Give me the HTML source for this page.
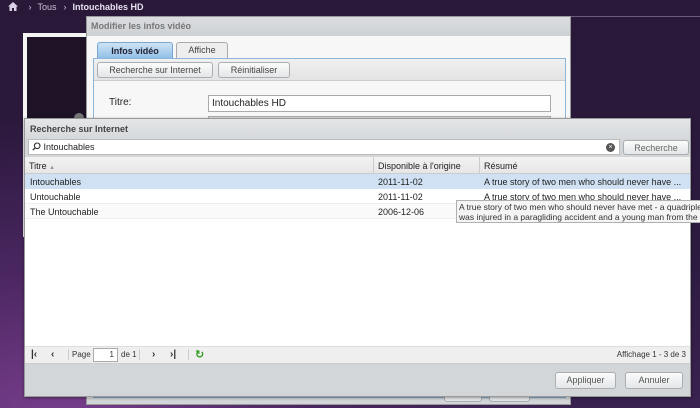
<!DOCTYPE html>
<html style="width:700px;height:408px;overflow:hidden"><head><meta charset="utf-8"><style>
*{box-sizing:border-box;margin:0;padding:0}
body{width:700px;height:408px;overflow:hidden;position:relative;font-family:"Liberation Sans","DejaVu Sans",sans-serif;font-size:9px;color:#222;
background:radial-gradient(ellipse 500px 300px at 60px 420px,#7a3f8e 0%,#4a2660 50%,transparent 100%),linear-gradient(180deg,#2a1838 0%,#2c1a40 60%,#3a2250 100%);}
.abs{position:absolute}
.btn{position:absolute;border:1px solid #a9aeb3;border-radius:3px;background:linear-gradient(#fbfbfb,#e4e6e8);color:#444;font-size:9px;text-align:center;line-height:14px}
</style></head><body>
<div class="abs" style="left:8px;top:2px;color:#c8c0d8;font-size:9px">
<svg width="10" height="9" viewBox="0 0 10 9" style="vertical-align:-1px"><path d="M5 0L0 4.5h1.5V9h2.5V6h2v3h2.5V4.5H10z" fill="#d8d0e6"/></svg>
<span style="margin-left:8px">›</span><span style="margin-left:6px">Tous</span><span style="margin-left:7px">›</span><b style="margin-left:6px;color:#e8e2f0">Intouchables HD</b></div>
<div class="abs" style="left:570px;top:16px;width:130px;height:1px;background:#6a5a7a"></div>
<div class="abs" style="left:23px;top:33px;width:70px;height:204px;background:#f4f4f4"></div>
<div class="abs" style="left:27px;top:37px;width:66px;height:200px;background:#1d1226"></div>
<div class="abs" style="left:74px;top:113px;width:10px;height:10px;border-radius:5px;background:#777"></div>
<!-- back dialog -->
<div class="abs" style="left:86px;top:16px;width:485px;height:389px;background:#f7f7f7;border:1px solid #999;overflow:hidden">
 <div style="height:19px;background:linear-gradient(#dadde0,#cdd1d4);color:#777;font-weight:bold;font-size:9px;padding:4px 4px">Modifier les infos vidéo</div>
 <div class="abs" style="left:10px;top:25px;width:76px;height:17px;border:1px solid #7aa7d0;border-bottom:none;border-radius:3px 3px 0 0;background:linear-gradient(#cfe3f5,#8ebde6);font-weight:bold;text-align:center;line-height:16px;color:#223">Infos vidéo</div>
 <div class="abs" style="left:89px;top:25px;width:52px;height:16px;border:1px solid #aaa;border-bottom:none;border-radius:3px 3px 0 0;background:#eee;text-align:center;line-height:15px;color:#444">Affiche</div>
 <div class="abs" style="left:6px;top:41px;width:473px;height:340px;border:1px solid #8eb6dc;background:#f7f7f7"></div>
 <div class="abs" style="left:7px;top:42px;width:471px;height:22px;background:linear-gradient(#f0f0f0,#e4e4e4);border-bottom:1px solid #ccc"></div>
 <div class="btn" style="left:10px;top:45px;width:116px;height:16px">Recherche sur Internet</div>
 <div class="btn" style="left:131px;top:45px;width:72px;height:16px">Réinitialiser</div>
 <div class="abs" style="left:22px;top:80px;font-size:10px">Titre:</div>
 <div class="abs" style="left:121px;top:78px;width:343px;height:17px;border:1px solid #aaa;background:#fff;font-size:10px;padding:2px 3px">Intouchables HD</div>
 <div class="abs" style="left:121px;top:99px;width:343px;height:10px;border:1px solid #aaa;background:#ddd"></div>
 <div class="abs" style="left:0;top:381px;width:485px;height:10px;background:#d3d6d9"></div>
 <div class="btn" style="left:357px;top:375px;width:38px;height:10px"></div>
 <div class="btn" style="left:402px;top:375px;width:41px;height:10px"></div>
</div>
<!-- front dialog -->
<div class="abs" style="left:24px;top:118px;width:667px;height:279px;background:#d3d6d9;border:1px solid #999;box-shadow:0 1px 3px rgba(0,0,0,.4)">
 <div style="height:20px;background:linear-gradient(#e4e6e8,#d6d9dc);font-weight:bold;color:#444;font-size:9px;padding:5px 5px">Recherche sur Internet</div>
 <div class="abs" style="left:3px;top:20px;width:592px;height:16px;background:#fff;border:1px solid #bbb;padding:2px 3px;font-size:9px">
  <svg width="9" height="9" viewBox="0 0 9 9" style="vertical-align:-1px"><circle cx="5.2" cy="3.8" r="2.8" fill="none" stroke="#333" stroke-width="1.1"/><path d="M3.2 5.8L0.8 8.2" stroke="#333" stroke-width="1.3"/></svg> Intouchables
  <span class="abs" style="right:4px;top:3px;width:9px;height:9px;border-radius:5px;background:#555;color:#fff;font-size:7px;line-height:9px;text-align:center">×</span></div>
 <div class="btn" style="left:598px;top:21px;width:66px;height:15px;color:#666">Recherche</div>
 <div class="abs" style="left:0;top:38px;width:665px;height:206px;background:#fff"></div>
 <div class="abs" style="left:0;top:38px;width:665px;height:17px;background:linear-gradient(#f3f3f3,#e6e6e6);border-bottom:1px solid #ccc"></div>
 <div class="abs" style="left:4px;top:42px">Titre <span style="color:#999;font-size:6px">▲</span></div>
 <div class="abs" style="left:348px;top:38px;width:1px;height:17px;background:#ccc"></div>
 <div class="abs" style="left:353px;top:42px">Disponible à l'origine</div>
 <div class="abs" style="left:454px;top:38px;width:1px;height:17px;background:#ccc"></div>
 <div class="abs" style="left:459px;top:42px">Résumé</div>
 <div class="abs" style="left:0;top:55px;width:665px;height:15px;background:#cfe1f3"></div>
 <div class="abs" style="left:0;top:70px;width:665px;height:15px;border-bottom:1px solid #eee"></div>
 <div class="abs" style="left:0;top:85px;width:665px;height:15px;background:#fafafa;border-bottom:1px solid #eee"></div>
 <div class="abs" style="left:5px;top:58px">Intouchables</div><div class="abs" style="left:353px;top:58px">2011-11-02</div><div class="abs" style="left:459px;top:58px">A true story of two men who should never have ...</div>
 <div class="abs" style="left:5px;top:73px">Untouchable</div><div class="abs" style="left:353px;top:73px">2011-11-02</div><div class="abs" style="left:459px;top:73px">A true story of two men who should never have ...</div>
 <div class="abs" style="left:5px;top:88px">The Untouchable</div><div class="abs" style="left:353px;top:88px">2006-12-06</div>
 <div class="abs" style="left:0;top:227px;width:665px;height:18px;background:#efefef;border-top:1px solid #ddd;border-bottom:1px solid #ccc;font-size:8px;color:#333">
  <span class="abs" style="left:6px;top:2px;font-weight:bold;font-size:10px">|‹</span><span class="abs" style="left:26px;top:2px;font-weight:bold;font-size:10px">‹</span>
  <span class="abs" style="left:43px;top:2px;width:1px;height:11px;background:#ccc"></span>
  <span class="abs" style="left:47px;top:3px">Page</span>
  <span class="abs" style="left:68px;top:1px;width:25px;height:14px;border:1px solid #aaa;background:#fff;text-align:right;padding-right:3px;line-height:12px">1</span>
  <span class="abs" style="left:96px;top:3px">de 1</span>
  <span class="abs" style="left:114px;top:2px;width:1px;height:11px;background:#ccc"></span>
  <span class="abs" style="left:127px;top:2px;font-weight:bold;font-size:10px">›</span><span class="abs" style="left:145px;top:2px;font-weight:bold;font-size:10px">›|</span>
  <span class="abs" style="left:163px;top:2px;width:1px;height:11px;background:#ccc"></span>
  <span class="abs" style="left:170px;top:1px;color:#2a9a1a;font-weight:bold;font-size:11px">↻</span>
  <span class="abs" style="right:4px;top:3px">Affichage 1 - 3 de 3</span>
 </div>
 <div class="btn" style="left:530px;top:253px;width:61px;height:17px;line-height:15px;color:#555">Appliquer</div>
 <div class="btn" style="left:600px;top:253px;width:58px;height:17px;line-height:15px;color:#555">Annuler</div>
</div>
<div class="abs" style="left:456px;top:200px;width:244px;height:23px;background:#f4f4f4;border:1px solid #b0b0b0;border-right:none;font-size:8.5px;line-height:10px;padding:1px 2px;color:#333;white-space:nowrap;overflow:hidden">A true story of two men who should never have met - a quadriplegic aristocrat who<br>was injured in a paragliding accident and a young man from the projects</div>
</body></html>
